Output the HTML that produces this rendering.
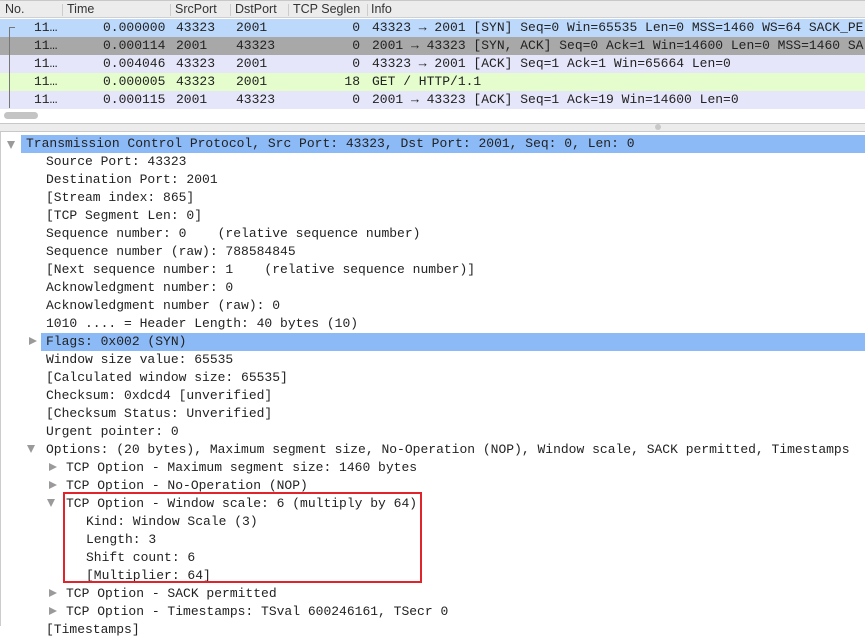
<!DOCTYPE html>
<html><head><meta charset="utf-8"><style>
*{margin:0;padding:0;box-sizing:border-box}
body{width:865px;height:626px;overflow:hidden;background:#fff;font-family:"Liberation Mono","DejaVu Sans Mono",monospace;font-size:13px;color:#222;position:relative}
.hdr{position:absolute;left:0;top:0;width:865px;height:18px;background:#ececec;border-top:1px solid #c8c8c8;border-bottom:1px solid #d0d0d0;font-family:"Liberation Sans",sans-serif;font-size:12.5px;color:#333}
.hdr span{position:absolute;top:1px}
.hdr i{position:absolute;top:3px;width:1px;height:12px;background:#ccc}
.row{position:absolute;left:0;width:865px;height:18px;line-height:18px;white-space:pre}
.row span{position:absolute;top:0}
.r{text-align:right}
.t{position:absolute;white-space:pre;line-height:18px;height:18px}
.arr{position:absolute;width:0;height:0}
.ar{border-top:4.5px solid transparent;border-bottom:4.5px solid transparent;border-left:8px solid #9a9a9a}
.ad{border-left:4.5px solid transparent;border-right:4.5px solid transparent;border-top:8px solid #9a9a9a}
</style></head><body>
<div class="hdr">
<span style="left:5px">No.</span><i style="left:62px"></i>
<span style="left:67px">Time</span><i style="left:170px"></i>
<span style="left:175px">SrcPort</span><i style="left:230px"></i>
<span style="left:235px">DstPort</span><i style="left:288px"></i>
<span style="left:293px">TCP Seglen</span><i style="left:367px"></i>
<span style="left:371px">Info</span>
</div>
<div class="row" style="top:19px;background:#bcd9fc"><span style="left:34px">11…</span><span style="left:103px">0.000000</span><span style="left:176px">43323</span><span style="left:236px">2001</span><span class="r" style="right:505px">0</span><span style="left:372px">43323 → 2001 [SYN] Seq=0 Win=65535 Len=0 MSS=1460 WS=64 SACK_PE</span></div>
<div class="row" style="top:37px;background:#a8a8a8"><span style="left:34px">11…</span><span style="left:103px">0.000114</span><span style="left:176px">2001</span><span style="left:236px">43323</span><span class="r" style="right:505px">0</span><span style="left:372px">2001 → 43323 [SYN, ACK] Seq=0 Ack=1 Win=14600 Len=0 MSS=1460 SA</span></div>
<div class="row" style="top:55px;background:#e6e6fa"><span style="left:34px">11…</span><span style="left:103px">0.004046</span><span style="left:176px">43323</span><span style="left:236px">2001</span><span class="r" style="right:505px">0</span><span style="left:372px">43323 → 2001 [ACK] Seq=1 Ack=1 Win=65664 Len=0</span></div>
<div class="row" style="top:73px;background:#e5fdcd"><span style="left:34px">11…</span><span style="left:103px">0.000005</span><span style="left:176px">43323</span><span style="left:236px">2001</span><span class="r" style="right:505px">18</span><span style="left:372px">GET / HTTP/1.1</span></div>
<div class="row" style="top:91px;background:#e6e6fa"><span style="left:34px">11…</span><span style="left:103px">0.000115</span><span style="left:176px">2001</span><span style="left:236px">43323</span><span class="r" style="right:505px">0</span><span style="left:372px">2001 → 43323 [ACK] Seq=1 Ack=19 Win=14600 Len=0</span></div>
<div style="position:absolute;left:9px;top:27px;width:6px;height:1px;background:#777"></div>
<div style="position:absolute;left:9px;top:27px;width:1px;height:81px;background:#777"></div>
<div style="position:absolute;left:4px;top:112px;width:34px;height:7px;border-radius:4px;background:#c4c4c4"></div>
<div style="position:absolute;left:0;top:123px;width:865px;height:9px;background:#ececec;border-top:1px solid #c8c8c8;border-bottom:1px solid #c8c8c8"></div>
<div style="position:absolute;left:655px;top:124px;width:6px;height:6px;border-radius:3px;background:#c8c8c8"></div>
<div style="position:absolute;left:0;top:132px;width:1px;height:494px;background:#ccc"></div>

<div style="position:absolute;left:21px;top:135px;width:844px;height:18px;background:#8cbaf7"></div>
<div style="position:absolute;left:41px;top:333px;width:824px;height:18px;background:#8cbaf7"></div>
<div class="arr ad" style="left:7px;top:141px"></div>
<div class="arr ar" style="left:29px;top:337px"></div>
<div class="arr ad" style="left:27px;top:445px"></div>
<div class="arr ar" style="left:49px;top:463px"></div>
<div class="arr ar" style="left:49px;top:481px"></div>
<div class="arr ad" style="left:47px;top:499px"></div>
<div class="arr ar" style="left:49px;top:589px"></div>
<div class="arr ar" style="left:49px;top:607px"></div>

<div class="t" style="left:26px;top:135px">Transmission Control Protocol, Src Port: 43323, Dst Port: 2001, Seq: 0, Len: 0</div>
<div class="t" style="left:46px;top:153px">Source Port: 43323</div>
<div class="t" style="left:46px;top:171px">Destination Port: 2001</div>
<div class="t" style="left:46px;top:189px">[Stream index: 865]</div>
<div class="t" style="left:46px;top:207px">[TCP Segment Len: 0]</div>
<div class="t" style="left:46px;top:225px">Sequence number: 0    (relative sequence number)</div>
<div class="t" style="left:46px;top:243px">Sequence number (raw): 788584845</div>
<div class="t" style="left:46px;top:261px">[Next sequence number: 1    (relative sequence number)]</div>
<div class="t" style="left:46px;top:279px">Acknowledgment number: 0</div>
<div class="t" style="left:46px;top:297px">Acknowledgment number (raw): 0</div>
<div class="t" style="left:46px;top:315px">1010 .... = Header Length: 40 bytes (10)</div>
<div class="t" style="left:46px;top:333px">Flags: 0x002 (SYN)</div>
<div class="t" style="left:46px;top:351px">Window size value: 65535</div>
<div class="t" style="left:46px;top:369px">[Calculated window size: 65535]</div>
<div class="t" style="left:46px;top:387px">Checksum: 0xdcd4 [unverified]</div>
<div class="t" style="left:46px;top:405px">[Checksum Status: Unverified]</div>
<div class="t" style="left:46px;top:423px">Urgent pointer: 0</div>
<div class="t" style="left:46px;top:441px">Options: (20 bytes), Maximum segment size, No-Operation (NOP), Window scale, SACK permitted, Timestamps</div>
<div class="t" style="left:66px;top:459px">TCP Option - Maximum segment size: 1460 bytes</div>
<div class="t" style="left:66px;top:477px">TCP Option - No-Operation (NOP)</div>
<div class="t" style="left:66px;top:495px">TCP Option - Window scale: 6 (multiply by 64)</div>
<div class="t" style="left:86px;top:513px">Kind: Window Scale (3)</div>
<div class="t" style="left:86px;top:531px">Length: 3</div>
<div class="t" style="left:86px;top:549px">Shift count: 6</div>
<div class="t" style="left:86px;top:567px">[Multiplier: 64]</div>
<div class="t" style="left:66px;top:585px">TCP Option - SACK permitted</div>
<div class="t" style="left:66px;top:603px">TCP Option - Timestamps: TSval 600246161, TSecr 0</div>
<div class="t" style="left:46px;top:621px">[Timestamps]</div>
<div style="position:absolute;left:63px;top:492px;width:359px;height:91px;border:2px solid #e0242c"></div>
</body></html>
